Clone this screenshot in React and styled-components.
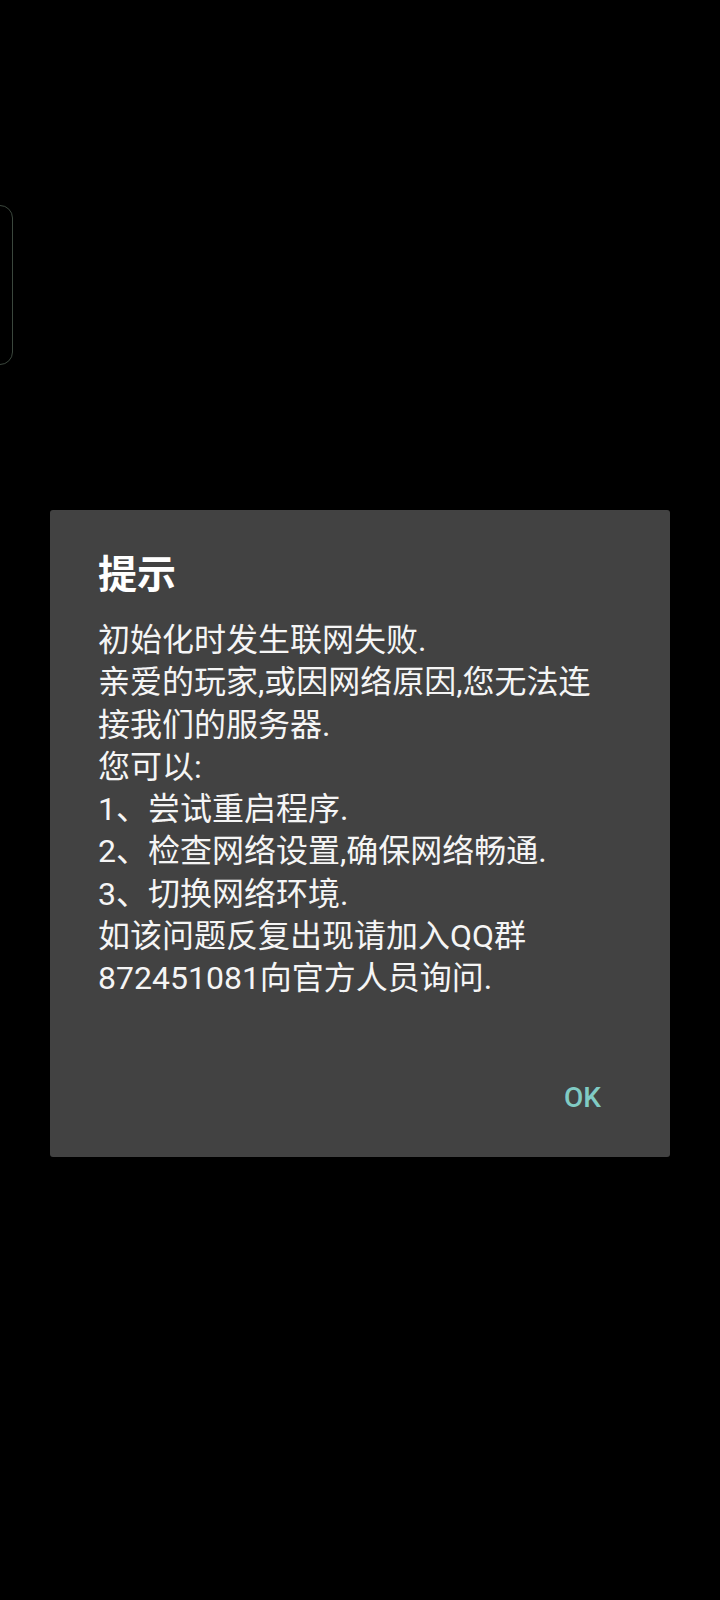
import styled, { createGlobalStyle } from 'styled-components'

// Styles globaux : fond noir, pas de marge

const GlobalStyle = createGlobalStyle`
  html, body {
    margin: 0;
    padding: 0;
    background: #000000;
  }
  * {
    box-sizing: border-box;
  }
`

const Screen = styled.div`
  position: relative;
  width: 720px;
  min-height: 1600px;
  background: #000000;
  padding-top: 510px;
  padding-left: 50px;
  overflow: hidden;
  font-family: Roboto, 'Noto Sans CJK SC', sans-serif;
`

// Poignée flottante sur le bord gauche

const SideHandle = styled.div`
  position: absolute;
  left: -20px;
  top: 205px;
  width: 33px;
  height: 160px;
  border: 1.5px solid #3b473d;
  border-radius: 13px;
`

const Dialog = styled.div`
  width: 620px;
  height: 647px;
  background: #424242;
  border-radius: 3px;
  padding: 40px 40px 0 48px;
  display: flex;
  flex-direction: column;
`

const Title = styled.h2`
  margin: 0;
  font-size: 39px;
  line-height: 50px;
  font-weight: 700;
  color: #ffffff;
`

const Message = styled.p`
  margin: 19px 0 0 0;
  font-size: 32px;
  line-height: 42.3px;
  font-weight: 400;
  color: #f5f5f5;
  white-space: pre-line;
`

const Actions = styled.div`
  display: flex;
  justify-content: flex-end;
  margin-top: 80px;
  margin-right: 29px;
`

const ActionButton = styled.button`
  background: none;
  border: none;
  padding: 0;
  font-family: Roboto, sans-serif;
  font-size: 28px;
  line-height: 36px;
  font-weight: 500;
  color: ${(props) => props.color || '#80cbc4'};
  cursor: pointer;
`

const message = `初始化时发生联网失败.
亲爱的玩家,或因网络原因,您无法连
接我们的服务器.
您可以:
1、尝试重启程序.
2、检查网络设置,确保网络畅通.
3、切换网络环境.
如该问题反复出现请加入QQ群
872451081向官方人员询问.`

const App = () => {
  return (
    <>
      <GlobalStyle />
      <Screen>
        <SideHandle />
        <Dialog>
          <Title>提示</Title>
          <Message>{message}</Message>
          <Actions>
            <ActionButton>OK</ActionButton>
          </Actions>
        </Dialog>
      </Screen>
    </>
  )
}

export default App
